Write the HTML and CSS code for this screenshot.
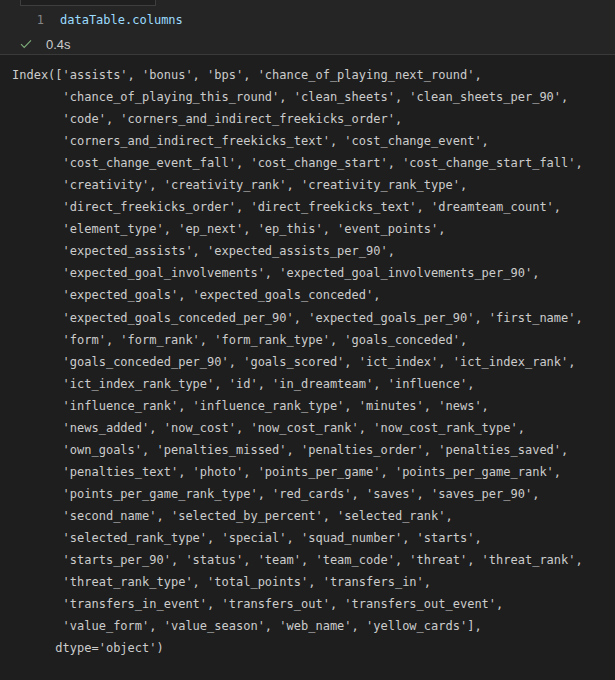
FILE: index.html
```html
<!DOCTYPE html>
<html lang="en">
<head>
<meta charset="utf-8">
<title>dataTable.columns</title>
<link rel="stylesheet" href="styles.css">
</head>
<body>
<div class="cell">
  <div class="prev-box"></div>
  <div class="code-line"><span class="ln">1</span><span class="code">dataTable.columns</span></div>
  <div class="status">
    <svg class="check" width="12" height="10" viewBox="0 0 12 10"><path d="M1 5.2 L4.2 8.4 L11 1.4" fill="none" stroke="#7fae7a" stroke-width="1.1"/></svg>
    <span class="time">0.4s</span>
  </div>
</div>
<pre class="output">Index(['assists', 'bonus', 'bps', 'chance_of_playing_next_round',
       'chance_of_playing_this_round', 'clean_sheets', 'clean_sheets_per_90',
       'code', 'corners_and_indirect_freekicks_order',
       'corners_and_indirect_freekicks_text', 'cost_change_event',
       'cost_change_event_fall', 'cost_change_start', 'cost_change_start_fall',
       'creativity', 'creativity_rank', 'creativity_rank_type',
       'direct_freekicks_order', 'direct_freekicks_text', 'dreamteam_count',
       'element_type', 'ep_next', 'ep_this', 'event_points',
       'expected_assists', 'expected_assists_per_90',
       'expected_goal_involvements', 'expected_goal_involvements_per_90',
       'expected_goals', 'expected_goals_conceded',
       'expected_goals_conceded_per_90', 'expected_goals_per_90', 'first_name',
       'form', 'form_rank', 'form_rank_type', 'goals_conceded',
       'goals_conceded_per_90', 'goals_scored', 'ict_index', 'ict_index_rank',
       'ict_index_rank_type', 'id', 'in_dreamteam', 'influence',
       'influence_rank', 'influence_rank_type', 'minutes', 'news',
       'news_added', 'now_cost', 'now_cost_rank', 'now_cost_rank_type',
       'own_goals', 'penalties_missed', 'penalties_order', 'penalties_saved',
       'penalties_text', 'photo', 'points_per_game', 'points_per_game_rank',
       'points_per_game_rank_type', 'red_cards', 'saves', 'saves_per_90',
       'second_name', 'selected_by_percent', 'selected_rank',
       'selected_rank_type', 'special', 'squad_number', 'starts',
       'starts_per_90', 'status', 'team', 'team_code', 'threat', 'threat_rank',
       'threat_rank_type', 'total_points', 'transfers_in',
       'transfers_in_event', 'transfers_out', 'transfers_out_event',
       'value_form', 'value_season', 'web_name', 'yellow_cards'],
      dtype='object')</pre>
</body>
</html>
```

FILE: styles.css
```css
html, body {
  margin: 0;
  padding: 0;
  background: #1e1e1e;
}

.cell {
  background: #252526;
  height: 54px;
  border-bottom: 1px solid #3a3a3a;
  position: relative;
}

.prev-box {
  position: absolute;
  left: 20px;
  top: 0;
  width: 134px;
  height: 5px;
  background: #1f1f1f;
  border: 1px solid #3e3e3e;
  border-top: none;
}

.code-line {
  display: flex;
  align-items: center;
  height: 20px;
  padding-top: 10px;
  font-family: "DejaVu Sans Mono", monospace;
  font-size: 12px;
}

.ln {
  width: 44px;
  text-align: right;
  color: #858585;
  padding-right: 16px;
}

.code {
  color: #9cdcfe;
}

.status {
  display: flex;
  align-items: center;
  height: 20px;
  margin-top: 4px;
  padding-left: 20px;
  font-family: "Liberation Sans", Arial, sans-serif;
  font-size: 13px;
  color: #cccccc;
}

.check {
  display: block;
  margin-right: 14px;
}

.output {
  margin: 0;
  padding: 9px 0 0 12px;
  font-family: "DejaVu Sans Mono", monospace;
  font-size: 12px;
  line-height: 22.05px;
  color: #cccccc;
  white-space: pre;
}
```
